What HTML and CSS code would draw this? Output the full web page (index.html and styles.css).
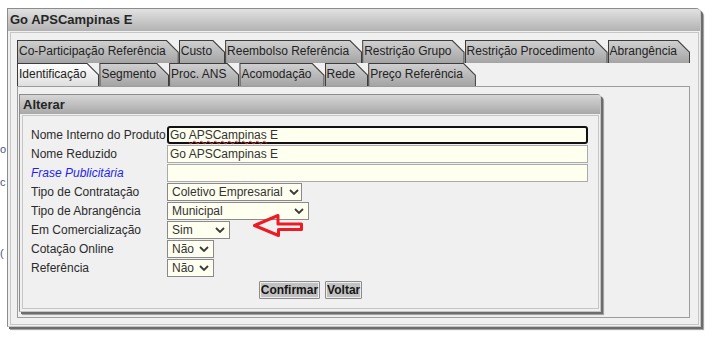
FILE: index.html
```html
<!DOCTYPE html>
<html lang="pt-BR">
<head>
<meta charset="utf-8">
<title>Go APSCampinas E</title>
<link rel="stylesheet" href="styles.css">
</head>
<body>
<div class="behind">
  <span class="behind-a">o</span>
  <span class="behind-b">c</span>
  <span class="behind-c">(</span>
</div>

<div class="win">
  <div class="win-title">Go APSCampinas E</div>
  <div class="win-body">
    <div class="tabs">
      <div class="tab-row">
        <span class="tab">Co-Participação Referência</span>
        <span class="tab">Custo</span>
        <span class="tab">Reembolso Referência</span>
        <span class="tab">Restrição Grupo</span>
        <span class="tab">Restrição Procedimento</span>
        <span class="tab">Abrangência</span>
      </div>
      <div class="tab-row">
        <span class="tab active">Identificação</span>
        <span class="tab">Segmento</span>
        <span class="tab">Proc. ANS</span>
        <span class="tab">Acomodação</span>
        <span class="tab">Rede</span>
        <span class="tab">Preço Referência</span>
      </div>
    </div>

    <div class="tab-panel">
      <div class="box">
        <div class="box-head">Alterar</div>
        <div class="box-body">
          <div class="form">
            <label class="lbl">Nome Interno do Produto</label>
            <div class="field focused"><span class="txt">Go <span class="spell">APSCampinas</span> E</span></div>

            <label class="lbl">Nome Reduzido</label>
            <div class="field w-full"><span class="txt">Go APSCampinas E</span></div>

            <label class="lbl lbl-opt">Frase Publicitária</label>
            <div class="field w-full"></div>

            <label class="lbl">Tipo de Contratação</label>
            <div class="sel sel-contr"><span>Coletivo Empresarial</span><svg class="chev" viewBox="0 0 10 6" width="10" height="6"><path d="M1 1 L5 5 L9 1" /></svg></div>

            <label class="lbl">Tipo de Abrangência</label>
            <div class="sel sel-abr"><span>Municipal</span><svg class="chev" viewBox="0 0 10 6" width="10" height="6"><path d="M1 1 L5 5 L9 1" /></svg></div>

            <label class="lbl">Em Comercialização</label>
            <div class="sel sel-sim"><span>Sim</span><svg class="chev" viewBox="0 0 10 6" width="10" height="6"><path d="M1 1 L5 5 L9 1" /></svg></div>

            <label class="lbl">Cotação Online</label>
            <div class="sel sel-nao"><span>Não</span><svg class="chev" viewBox="0 0 10 6" width="10" height="6"><path d="M1 1 L5 5 L9 1" /></svg></div>

            <label class="lbl">Referência</label>
            <div class="sel sel-nao"><span>Não</span><svg class="chev" viewBox="0 0 10 6" width="10" height="6"><path d="M1 1 L5 5 L9 1" /></svg></div>
          </div>
          <div class="actions">
            <button class="btn" type="button">Confirmar</button>
            <button class="btn" type="button">Voltar</button>
          </div>
        </div>
      </div>
    </div>
  </div>
</div>

<svg class="arrow" viewBox="0 0 60 30" width="60" height="30">
  <polygon points="6.5,15.5 30,5.5 30,14 53.5,14 53.5,19.5 30.5,19.5 30.5,25.5" />
</svg>
</body>
</html>
```

FILE: styles.css
```css
* { box-sizing: border-box; }

body {
  margin: 0;
  width: 722px;
  height: 337px;
  overflow: hidden;
  position: relative;
  background: #ffffff;
  font-family: "Liberation Sans", Arial, sans-serif;
  font-size: 12px;
  color: #2b2b2b;
}

/* fragments of page text behind the window, at the left edge */
.behind span {
  position: absolute;
  left: 0;
  color: #4a5680;
  font-size: 11px;
}
.behind-a { top: 143px; }
.behind-b { top: 176px; }
.behind-c { top: 247px; }

/* outer window */
.win {
  margin: 8px 0 0 7px;
  width: 694px;
  border-top: 1px solid #8c8c8c;
  border-left: 1px solid #8c8c8c;
  border-right: 1px solid #c4c4c4;
  border-bottom: 1px solid #c4c4c4;
  border-radius: 0 5px 0 0;
  background: #f0f0f0;
  box-shadow: 2px 2px 0 #6c6c6c, 3px 3px 1px #9a9a9a;
}

.win-title {
  height: 22px;
  line-height: 22px;
  padding-left: 2px;
  font-weight: bold;
  font-size: 13px;
  color: #262626;
  background: linear-gradient(#e2e2e2, #b2b2b2);
  border-radius: 0 4px 0 0;
}

.win-body {
  margin: 1px 1px 1px 2px;
  border: 1px solid #c6c6c6;
  padding: 7px 8px 6px 6px;
}

/* tabs */
.tab-row {
  display: flex;
  height: 23px;
}

.tab {
  position: relative;
  display: block;
  height: 23px;
  line-height: 23px;
  padding: 0 13px 0 2px;
  color: #222;
  background: #3c3c3c;
  white-space: nowrap;
  clip-path: polygon(0 0, calc(100% - 12px) 0, 100% 12px, 100% 100%, 0 100%);
}

.tab::before {
  content: "";
  position: absolute;
  top: 1px;
  left: 1px;
  right: 1px;
  bottom: 0;
  z-index: -1;
  background: linear-gradient(#cfcfcf, #a4a4a4);
  clip-path: polygon(0 0, calc(100% - 11.6px) 0, 100% 11.6px, 100% 100%, 0 100%);
}

.tab.active::before {
  background: linear-gradient(#ffffff, #dedede);
}

/* tab content */
.tab-panel {
  width: 673px;
  border: 1px solid #9c9c9c;
  background: #f0f0f0;
  padding: 7px 0 5px 1px;
}

.box {
  width: 582px;
  border-top: 1px solid #8c8c8c;
  border-left: 1px solid #8c8c8c;
  border-right: 1px solid #c4c4c4;
  border-bottom: 1px solid #c4c4c4;
  border-radius: 0 4px 0 0;
  box-shadow: 2px 2px 0 #6c6c6c, 3px 3px 1px #9a9a9a;
  background: #f0f0f0;
}

.box-head {
  height: 19px;
  line-height: 19px;
  padding-left: 3px;
  font-weight: bold;
  font-size: 13px;
  color: #262626;
  background: linear-gradient(#d6d6d6, #a8a8a8);
  border-radius: 0 3px 0 0;
}

.box-body {
  margin: 1px 1px 2px 2px;
  border: 1px solid #c6c6c6;
  padding: 10px 8px 9px 8px;
}

/* form */
.form {
  display: grid;
  grid-template-columns: 136px auto;
  grid-auto-rows: 18px;
  row-gap: 1px;
  align-items: center;
  justify-items: start;
}

.lbl {
  line-height: 18px;
  color: #2b2b2b;
  white-space: nowrap;
}

.lbl-opt {
  color: #1f1fee;
  font-style: italic;
}

.field {
  width: 421px;
  height: 18px;
  border: 1px solid #aaaaaa;
  background: #fffff0;
  padding-left: 2px;
  line-height: 16px;
  color: #333;
}

.field.focused {
  border: 2px solid #111;
  border-radius: 3px;
  padding-left: 1px;
  line-height: 14px;
}

.spell {
  text-decoration: underline wavy #e04040;
  text-decoration-thickness: 1px;
  text-underline-offset: 1px;
}

.sel {
  display: flex;
  align-items: center;
  justify-content: space-between;
  height: 18px;
  border: 1px solid #8a8a8a;
  background: #fffff0;
  padding: 0 4px 0 4px;
  color: #333;
  white-space: nowrap;
}

.sel-contr { width: 135px; padding-right: 2px; }
.sel-abr { width: 142px; }
.sel-sim { width: 63px; }
.sel-nao { width: 47px; }

.chev {
  flex: none;
  fill: none;
  stroke: #3a3a3a;
  stroke-width: 1.8;
}

.actions {
  display: flex;
  justify-content: center;
  gap: 5px;
  margin-top: 4px;
}

.btn {
  height: 18px;
  padding: 0 1px;
  font-family: "Liberation Sans", Arial, sans-serif;
  font-size: 12px;
  font-weight: bold;
  color: #151515;
  background: #c2c2c2;
  border: 1px solid #8c8c8c;
  box-shadow: inset 0 0 0 1px #ececec;
  border-radius: 1px;
}

/* annotation arrow drawn over the form */
.arrow {
  position: absolute;
  left: 248px;
  top: 210px;
}
.arrow polygon {
  fill: none;
  stroke: #ec1c24;
  stroke-width: 3;
  stroke-linejoin: round;
}
```
